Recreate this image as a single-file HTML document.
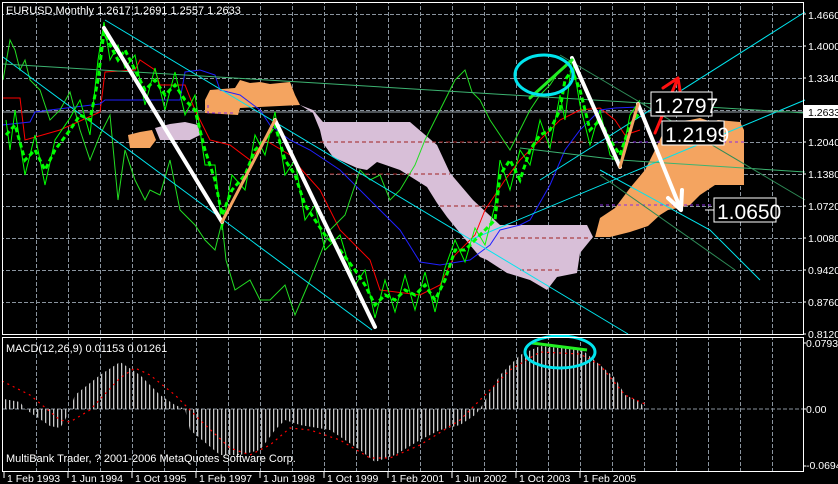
<!DOCTYPE html>
<html><head><meta charset="utf-8"><style>
html,body{margin:0;padding:0;background:#000;width:838px;height:484px;overflow:hidden}
svg{display:block}
text{font-family:"Liberation Sans","DejaVu Sans",sans-serif;font-size:11px;fill:#fff}
.ax{font-size:10.5px}
</style></head><body>
<svg width="838" height="484" viewBox="0 0 838 484" xmlns="http://www.w3.org/2000/svg">
<defs>
<pattern id="hb" width="4" height="4" patternUnits="userSpaceOnUse"><rect x="1" y="0" width="1.3" height="4" fill="#c8c8c8"/></pattern>
<pattern id="vg" x="4" y="0" width="32" height="6" patternUnits="userSpaceOnUse"><rect x="0" y="0" width="1" height="4" fill="#8a949e"/></pattern>
<pattern id="hg" x="0" y="14" width="6" height="32" patternUnits="userSpaceOnUse"><rect x="0" y="0" width="4" height="1" fill="#8a949e"/></pattern>
</defs>
<rect width="838" height="484" fill="#000"/>
<!-- grid -->
<rect x="30" y="3" width="760" height="331" fill="url(#vg)"/>
<rect x="30" y="338" width="760" height="133" fill="url(#vg)"/>
<rect x="3" y="14" width="800" height="300" fill="url(#hg)"/>
<rect x="3" y="409" width="800" height="1" fill="url(#hg)"/>
<g fill="#8a949e"><rect x="3" y="409" width="800" height="1" opacity="0.0"/></g>
<path d="M3 409H803" stroke="#8a949e" stroke-dasharray="4,2"/>
<path d="M3 112H803" stroke="#9aa3ab" stroke-width="1"/>
<!-- clouds -->
<path d="M300 105L313 110L323 122L410 122L417 128L437 145L450 173L473 200L500 225L587 225L593 237L580 253L577 273L557 277L547 290L530 280L507 273L487 260L480 257L460 233L447 217L437 203L427 187L400 170L377 162L367 170L357 168L333 157L323 143L320 130L313 113Z" fill="#d8bfd8"/>
<path d="M155 128L170 124L185 122L198 125L200 135L190 140L160 140Z" fill="#d8bfd8"/>
<path d="M205 100L210 90L235 88L240 80L250 83L260 82L270 84L290 82L295 95L300 105L240 108L238 115L205 113Z" fill="#f4a460"/>
<path d="M128 135L140 132L152 130L156 140L150 148L130 148Z" fill="#f4a460"/>
<path d="M595 237L600 218L615 208L630 188L645 170L655 150L662 135L670 122L690 120L700 118L712 122L718 120L740 122L744 130L744 185L715 185L700 195L690 205L678 208L668 210L660 215L648 226L630 232L610 237Z" fill="#f4a460"/>
<g stroke="#8a2be2" stroke-width="1" stroke-dasharray="3,3" fill="none"><path d="M208 105V113H235M615 142H744M600 205H744"/></g>
<g stroke="#a02020" stroke-width="1" stroke-dasharray="4,3" fill="none"><path d="M320 142H587M330 174H450M440 206H520M500 238H590M520 270H560"/></g>
<!-- ichimoku lines -->
<polyline fill="none" stroke="#ff0000" stroke-width="1" points="2,98 20,98 25,140 60,130 100,112 105,72 135,70 140,60 155,70 160,85 185,85 195,110 210,140 230,145 250,160 265,140 290,155 302,170 320,190 340,230 370,260 380,290 420,295 440,285 455,255 475,235 485,210 505,180 520,160 540,140 560,120 580,110 600,108 615,120 625,135 640,130"/>
<polyline fill="none" stroke="#2020ff" stroke-width="1" points="2,125 30,122 35,112 50,110 100,104 105,100 180,100 185,72 200,70 215,75 220,90 240,95 260,110 270,125 290,140 310,150 340,170 370,200 400,230 420,262 440,265 470,260 490,245 500,230 520,225 530,220 550,185 565,150 580,130 600,110 615,108 640,107"/>
<polyline fill="none" stroke="#22dd22" stroke-width="1" points="3,80 10,40 15,50 20,70 25,60 30,80 40,90 50,120 60,110 70,92 80,130 90,160 100,135 110,115 118,200 125,150 135,180 145,200 150,190 160,195 170,160 180,210 195,225 205,240 215,250 222,222 226,260 235,290 250,280 260,300 270,300 285,285 295,315 310,280 330,230 345,215 360,170 370,180 380,175 390,200 400,190 415,165 425,140 440,110 455,80 465,70 472,92 480,100 490,120 500,135 510,150 520,130 530,110 540,95 550,85 560,70 572,60"/>
<!-- trend lines -->
<g fill="none" stroke-width="1">
<path d="M105 20L628 334" stroke="#00e5ee"/>
<path d="M3 57L372 330" stroke="#00e5ee"/>
<path d="M540 180L805 12" stroke="#00e5ee"/>
<path d="M470 240L805 100" stroke="#00e5ee"/>
<path d="M600 170L710 230L760 280" stroke="#00e5ee"/>
<path d="M3 64L300 82L805 113" stroke="#3cb371"/>
<path d="M520 148L620 160L805 172" stroke="#3cb371"/>
<path d="M560 55L805 200" stroke="#2e8b57"/>
<path d="M600 175L735 270" stroke="#2e8b57"/>
</g>
<!-- candles approximated -->
<polyline fill="none" stroke="#00ff00" stroke-width="1" points="6,120 10,150 15,110 25,175 35,135 45,185 55,140 70,118 80,100 90,135 98,60 104,22 110,60 118,45 125,68 135,55 145,105 155,68 165,110 175,72 185,115 195,95 205,165 215,165 222,230 232,175 245,190 255,135 265,155 275,112 285,175 295,160 305,220 315,205 325,250 340,235 355,285 365,270 375,318 385,280 395,312 405,275 415,310 425,272 435,312 445,268 455,240 465,262 475,228 485,245 495,205 500,160 510,190 520,150 530,165 540,120 550,148 560,95 565,120 572,58 580,105 590,145 600,110 610,155 620,165 630,115 640,100"/>
<polyline fill="none" stroke="#00ff00" stroke-width="3" stroke-dasharray="5,3" points="6,135 15,125 25,160 35,150 45,170 55,150 70,130 80,115 90,120 98,80 104,32 110,45 118,60 125,50 135,70 145,90 155,80 165,95 175,85 185,100 195,110 205,150 215,180 222,215 232,190 245,175 255,150 265,140 275,125 285,160 295,175 305,205 315,220 325,235 340,250 355,270 365,285 375,305 385,295 395,300 405,290 415,295 425,285 435,300 445,280 455,250 465,250 475,240 485,230 495,220 500,175 510,160 520,180 530,150 540,135 550,130 560,110 565,80 572,70 580,90 590,130 600,120 610,140 620,155 630,125 640,112"/>
<!-- big annotations -->
<g fill="none" stroke-linecap="round">
<path d="M104 28L222 222" stroke="#fff" stroke-width="4"/>
<path d="M275 120L375 327" stroke="#fff" stroke-width="4"/>
<path d="M572 58L620 167" stroke="#fff" stroke-width="4"/>
<path d="M638 104L681 210M681 210L682 190M681 210L668 198" stroke="#fff" stroke-width="4"/>
<path d="M222 222L275 120" stroke="#f4a460" stroke-width="3"/>
<path d="M620 167L638 104" stroke="#f4a460" stroke-width="3"/>
<path d="M530 98L572 60" stroke="#22ee22" stroke-width="3"/>
<path d="M655 133L678 78M678 78L663 88M678 78L681 97" stroke="#ff1010" stroke-width="3"/>
<ellipse cx="544" cy="75" rx="29" ry="20" stroke="#00e5ee" stroke-width="3"/>
</g>
<g>
<rect x="651" y="92" width="61" height="24" fill="#000" stroke="#fff"/>
<text x="654" y="113" style="font-size:21px">1.2797</text>
<rect x="662" y="121" width="62" height="24" fill="#000" stroke="#fff"/>
<text x="665" y="142" style="font-size:21px">1.2199</text>
<rect x="714" y="198" width="62" height="24" fill="#000" stroke="#fff"/>
<path d="M705 210H714" stroke="#fff"/>
<text x="717" y="219" style="font-size:21px">1.0650</text>
</g>
<!-- MACD -->
<path d="M4 409L4 399L20 402L25 409L50 426L60 428L65 420L70 409L75 395L100 375L120 362L140 375L160 395L175 405L185 409L190 430L220 455L240 455L260 450L275 430L285 420L300 425L330 430L360 450L375 462L395 455L420 440L440 430L460 425L475 415L480 409L500 375L520 355L540 346L560 348L580 348L600 365L615 378L625 395L640 402L645 409Z" fill="url(#hb)"/>
<polyline fill="none" stroke="#ff0000" stroke-width="1.2" stroke-dasharray="2,4" points="2,381 30,395 60,420 70,422 90,410 120,378 135,368 150,375 175,395 200,420 230,448 250,455 270,445 290,428 310,430 340,440 370,458 390,458 420,445 460,420 490,390 510,370 540,352 580,354 600,365 625,395 645,404"/>
<path d="M532 343L587 350" stroke="#22ee22" stroke-width="3"/>
<ellipse cx="560" cy="352" rx="35" ry="16" fill="none" stroke="#00e5ee" stroke-width="3"/>
<!-- frames -->
<rect x="2.5" y="2.5" width="801" height="332" fill="none" stroke="#fff"/>
<rect x="2.5" y="337.5" width="801" height="134" fill="none" stroke="#fff"/>
<!-- texts -->
<text x="6" y="14">EURUSD,Monthly  1.2617 1.2691 1.2557 1.2633</text>
<text x="6" y="352">MACD(12,26,9) 0.01153 0.01261</text>
<text x="6" y="462">MultiBank Trader, ? 2001-2006 MetaQuotes Software Corp.</text>
<g class="ax">
<text class="ax" x="808" y="19">1.4660</text>
<text class="ax" x="808" y="50">1.4000</text>
<text class="ax" x="808" y="82">1.3340</text>
<rect x="804" y="105" width="34" height="13" fill="#fff"/>
<text class="ax" x="808" y="116" style="fill:#000">1.2633</text>
<text class="ax" x="808" y="146">1.2040</text>
<text class="ax" x="808" y="178">1.1380</text>
<text class="ax" x="808" y="210">1.0720</text>
<text class="ax" x="808" y="242">1.0080</text>
<text class="ax" x="808" y="274">0.9420</text>
<text class="ax" x="808" y="306">0.8760</text>
<text class="ax" x="808" y="338">0.8120</text>
<text class="ax" x="806" y="347">0.07938</text>
<text class="ax" x="806" y="413">0.00</text>
<text class="ax" x="806" y="469">-0.06947</text>
</g>
<g stroke="#fff"><path d="M803 14h3M803 46h3M803 78h3M803 142h3M803 174h3M803 206h3M803 238h3M803 270h3M803 302h3M803 334h3M803 343h3M803 409h3M803 466h3"/>
<path d="M4 472v6M68 472v6M132 472v6M196 472v6M260 472v6M324 472v6M388 472v6M452 472v6M516 472v6M580 472v6"/></g>
<text class="ax" x="7" y="482">1 Feb 1993</text>
<text class="ax" x="71" y="482">1 Jun 1994</text>
<text class="ax" x="135" y="482">1 Oct 1995</text>
<text class="ax" x="199" y="482">1 Feb 1997</text>
<text class="ax" x="263" y="482">1 Jun 1998</text>
<text class="ax" x="327" y="482">1 Oct 1999</text>
<text class="ax" x="391" y="482">1 Feb 2001</text>
<text class="ax" x="455" y="482">1 Jun 2002</text>
<text class="ax" x="519" y="482">1 Oct 2003</text>
<text class="ax" x="583" y="482">1 Feb 2005</text>
</svg>
</body></html>
